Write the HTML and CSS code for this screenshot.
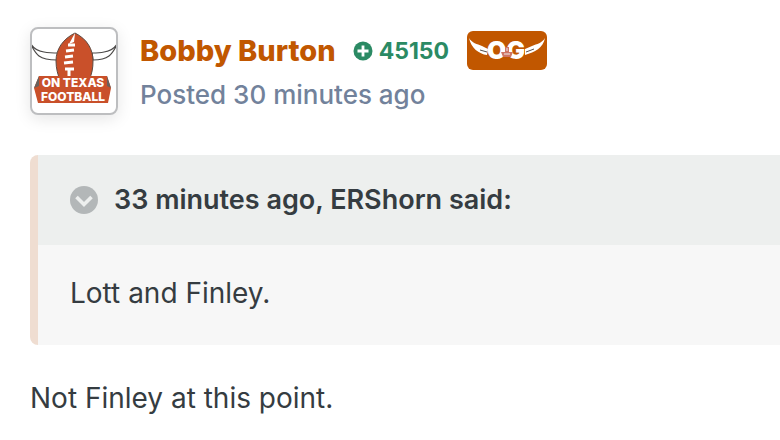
FILE: index.html
```
<!DOCTYPE html>
<html lang="en">
<head>
<meta charset="utf-8">
<title>On Texas Football</title>
<link rel="stylesheet" href="styles.css">
</head>

<body>

<article class="post">

	<header class="post-header">
		<a href="#" class="avatar">
			<svg viewBox="0 0 84 84" role="img" aria-label="On Texas Football">
				<g fill="#fff" stroke="#4c4a49" stroke-width="1.2" stroke-linejoin="round">
					<path d="M-1 15 C2 20 6 22 12 23 C17 24 21 24 27 24 L25 31 C17 31 11 30 7 27 C3 24 1 19 -1 16 Z"/>
					<path d="M85 15 C82 20 78 22 72 23 C68 24 66 24 60 24 L61 31 C68 31 73 30 77 27 C81 24 83 19 85 16 Z"/>
				</g>
				<path d="M43 4 C31 10 24 20 24 32 C24 40 26 46 28 51 H57 C60 45 61 39 61 32 C61 20 55 10 43 4 Z" fill="#c9502a" stroke="#5c4a42" stroke-width="1"/>
				<path d="M43 4 L37 15 L42 13 Z" fill="#fff"/>
				<path d="M36 16 H43 M34 22 L42 21 M33 28 L41 27 M32 34 L41 33 M33 40 H42 M37 40 V47" fill="none" stroke="#fff" stroke-width="3"/>
				<path d="M2 59 L7 47 H75 L79 59 L76 74 H6 Z" fill="#c9502a"/>
				<path d="M2 59 L7 47 V57 Z M79 59 L75 47 V57 Z" fill="#68615e"/>
				<text class="logo-text" x="41" y="58">ON TEXAS</text>
				<text class="logo-text" x="41" y="72">FOOTBALL</text>
			</svg>
		</a>
		<div class="post-info">
			<div class="author-line">
				<a href="#" class="author">Bobby Burton</a>
				<span class="reputation">
					<svg class="rep-icon" viewBox="0 0 20 20" aria-hidden="true">
						<circle cx="10" cy="10" r="9.5" fill="#2b8a64"/>
						<path d="M10 4.5 V15.5 M4.5 10 H15.5" stroke="#fff" stroke-width="2.8"/>
					</svg>
					45150
				</span>
				<svg class="badge" viewBox="0 0 80 39" role="img" aria-label="OG">
					<rect width="80" height="39" rx="6" fill="#c15700"/>
					<path d="M2 7 C5 12 10 13 15 15 L21 18 L20 24 C12 23 4 17 2 7 Z" fill="#fff"/>
					<path d="M78 7 C75 12 70 13 65 15 L58 18 L58 24 C68 21 76 17 78 7 Z" fill="#fff"/>
					<path d="M13 19 L20 21 M67 18 L59 21" stroke="#55504d"/>
					<text class="badge-text" x="39" y="28">OG</text>
					<path d="M34 21 H46 L44 26 H36 Z M38 16 H42 V21 H38 Z" fill="#ce7565"/>
					<path d="M37 23 H43 M40 17 V20" stroke="#eee"/>
				</svg>
			</div>
			<a href="#" class="posted">Posted <time>30 minutes ago</time></a>
		</div>
	</header>

	<blockquote class="quote">
		<div class="quote-title">
			<button type="button" class="toggle" aria-label="Collapse quote">
				<svg viewBox="0 0 28 28" aria-hidden="true">
					<circle cx="14" cy="14" r="14" fill="#b3b7b8"/>
					<path d="M6.5 11 L14 18.5 L21.5 11" fill="none" stroke="#edefee" stroke-width="3.6"/>
				</svg>
			</button>
			33 minutes ago, ERShorn said:
		</div>
		<p class="quote-body">Lott and Finley.</p>
	</blockquote>

	<p class="reply">Not Finley at this point.</p>

</article>

</body>
</html>
```
FILE: styles.css
```
body {
	margin: 0;
	background: #fff;
	color: #353c41;
	font-family: Inter, "Liberation Sans", sans-serif;
	font-size: 28px;
	line-height: 42px;
	overflow-x: hidden;
}
a {
	color: inherit;
	text-decoration: none;
}
svg { display: block; }
.post { padding: 27px 0 20px 30px; }
.post-header {
	display: flex;
	gap: 22px;
}
.avatar {
	flex: none;
	box-sizing: border-box;
	width: 88px;
	height: 88px;
	overflow: hidden;
	background: #fff;
	border: 2px solid #bdbec0;
	border-radius: 8px;
	box-shadow: 0 4px 16px rgba(0,0,0,.1);
}
.logo-text, .badge-text {
	fill: #fff;
	font-size: 12px;
	font-weight: 800;
	text-anchor: middle;
}
.badge-text {
	font-size: 25px;
	font-weight: 900;
}
.author-line {
	display: flex;
	align-items: center;
	height: 47px;
}
.author {
	color: #c15700;
	font-size: 29px;
	font-weight: 800;
}
.reputation {
	display: flex;
	align-items: center;
	gap: 6px;
	margin: 0 18px 0 17px;
	color: #2b8a64;
	font-size: 23px;
	font-weight: 700;
}
.rep-icon { width: 20px; }
.badge { width: 80px; }
.posted {
	display: block;
	color: #72829b;
	font-size: 26px;
	font-weight: 500;
}
.quote {
	margin: 39px 0 32px;
	background: #f7f7f7;
	border-left: 8px solid #efddd1;
	border-radius: 8px 0 0 8px;
}
.quote-title {
	display: flex;
	align-items: center;
	gap: 16px;
	padding: 24px 32px;
	background: #edefee;
	font-size: 27px;
	font-weight: 600;
}
.toggle {
	width: 28px;
	padding: 0;
	border: 0;
	background: none;
	cursor: pointer;
}
.quote-body {
	margin: 0;
	padding: 27px 32px 31px;
}
.reply { margin: 0; }
```
